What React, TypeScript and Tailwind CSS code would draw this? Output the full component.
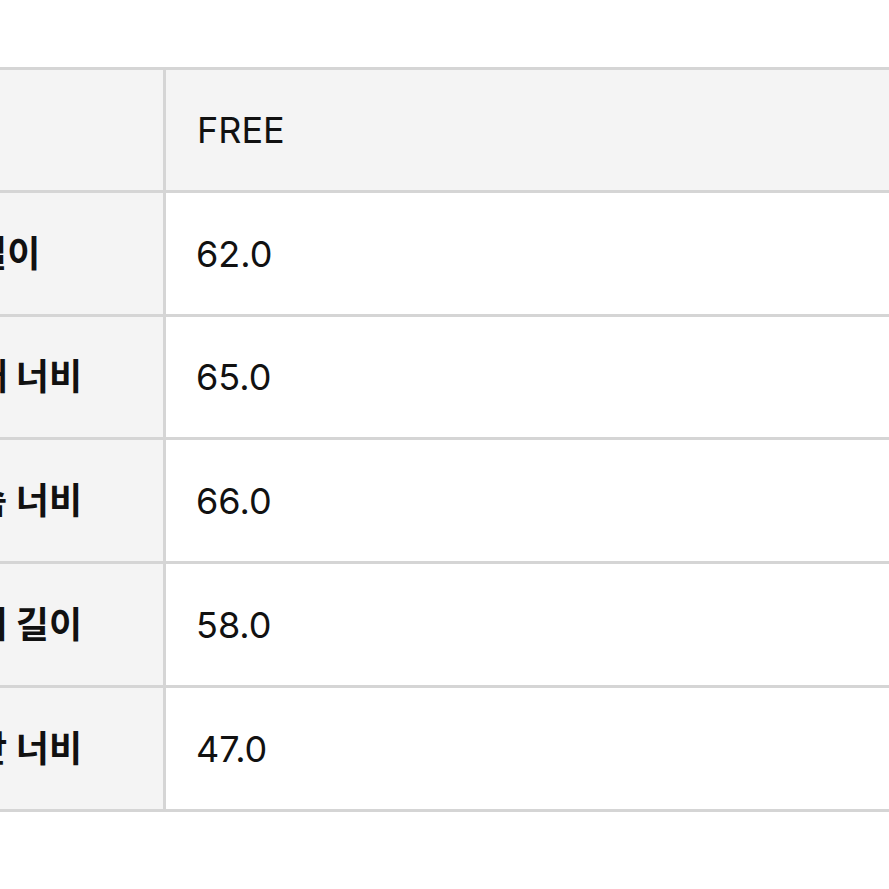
const rows = [
  { label: "총길이", value: "62.0", h: "h-[124px]" },
  { label: "어깨 너비", value: "65.0", h: "h-[123px]" },
  { label: "가슴 너비", value: "66.0", h: "h-[124px]" },
  { label: "소매 길이", value: "58.0", h: "h-[124px]" },
  { label: "밑단 너비", value: "47.0", h: "h-[124px]" },
];

const font = {
  fontFamily: '"Inter", "Noto Sans CJK KR", sans-serif',
};

export default function App() {
  return (
    <div className="w-[889px] h-[889px] overflow-hidden bg-white text-[#111]" style={font}>
      <div className="pt-[67px] -ml-[100px] w-[1100px]">
        <div className="border-t-[3px] border-[#d5d5d5]">
          {/* Header */}
          <div className="flex h-[123px] border-b-[3px] border-[#d5d5d5] bg-[#f4f4f4]">
            <div className="w-[266px] border-r-[3px] border-[#d5d5d5]" />
            <div className="flex flex-1 items-center pl-[31px] text-[36px]">FREE</div>
          </div>

          {/* Size rows */}
          {rows.map((row) => (
            <div key={row.label} className={`flex ${row.h} border-b-[3px] border-[#d5d5d5]`}>
              <div className="flex w-[266px] items-center border-r-[3px] border-[#d5d5d5] bg-[#f4f4f4] pl-[41px] text-[36px] font-bold">
                {row.label}
              </div>
              <div className="flex flex-1 items-center bg-white pl-[30px] text-[36px]">{row.value}</div>
            </div>
          ))}
        </div>
      </div>
    </div>
  );
}
